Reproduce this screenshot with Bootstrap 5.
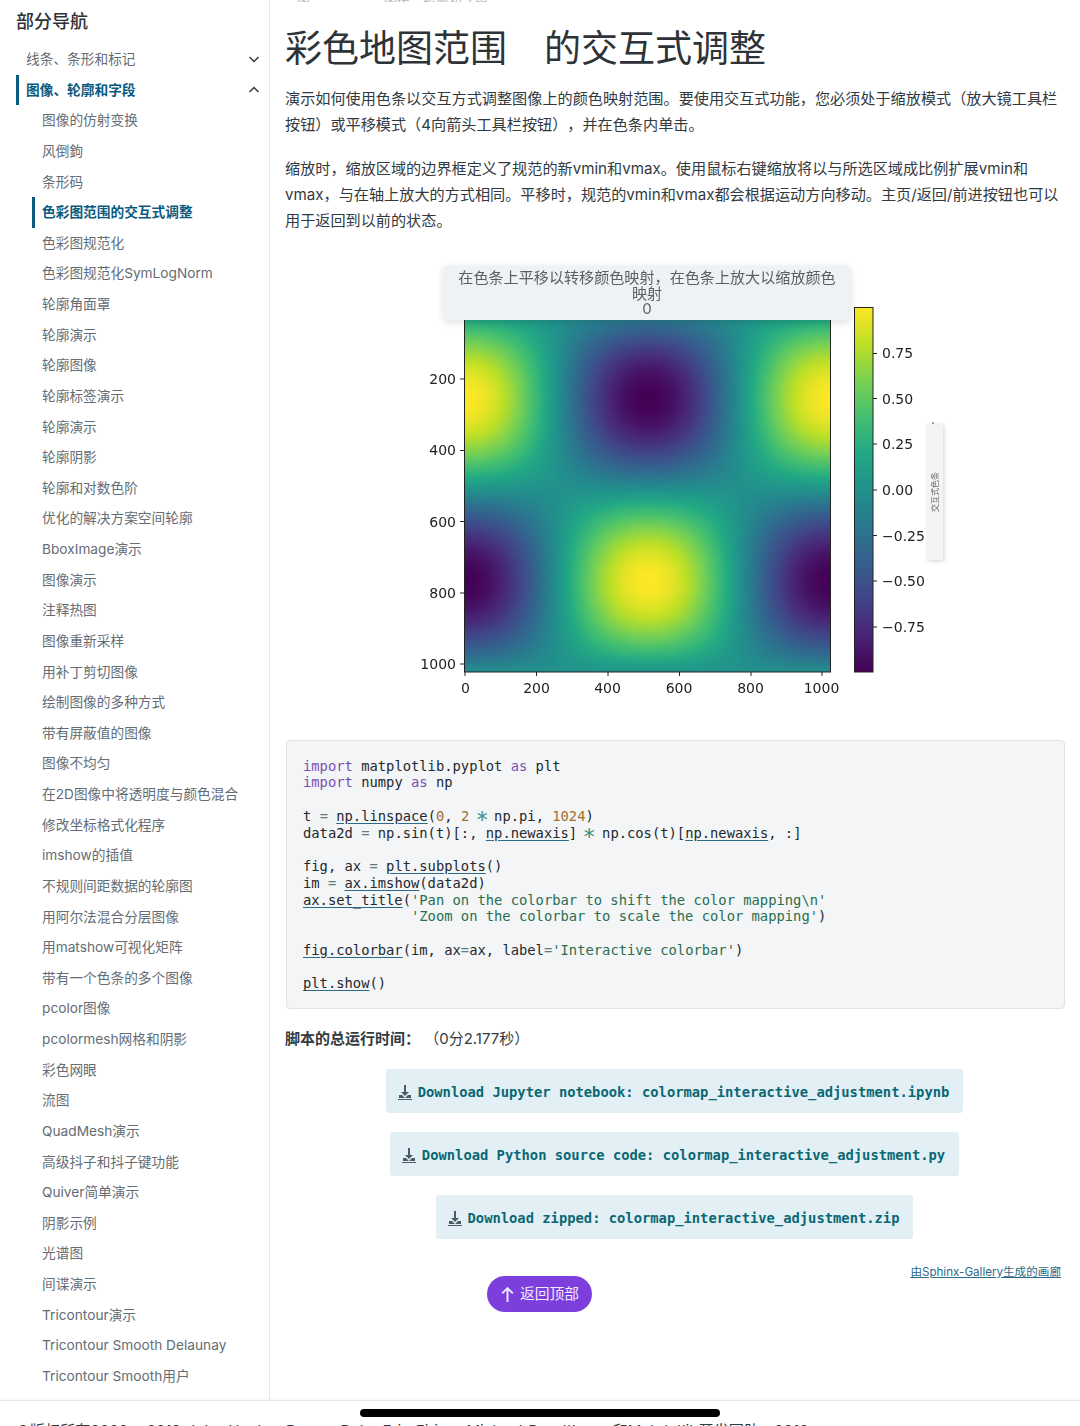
<!DOCTYPE html>
<html lang="zh-CN">
<head>
<meta charset="UTF-8">
<meta name="viewport" content="width=device-width, initial-scale=1.0">
<title>色彩图范围的交互式调整</title>
<link href="https://cdn.jsdelivr.net/npm/bootstrap@5.3.2/dist/css/bootstrap.min.css" rel="stylesheet">
<style>
html, body { height: 1426px; overflow: hidden; }
body { font-family: Inter, "Noto Sans CJK SC", sans-serif; color: #323a41; background: #fff; text-spacing-trim: space-all; }
.page-wrap { height: 1400px; }
.side-nav { width: 270px; flex: none; border-right: 1px solid #e3e6e8; padding: 0 9px 0 16px; }
.side-title { font-size: 18px; font-weight: 500; color: #2e3338; line-height: 22px; margin: 10.500px 0 11.500px; }
.side-nav .nav-link { font-size: 13.7px; line-height: 30.63px; height: 30.63px; padding: 0 0 0 7px; color: #646d75; border-left: 3px solid transparent; white-space: nowrap; }
.side-nav .sub-list .nav-link { margin-left: 16px; }
.side-nav .nav-link.on { color: #0a5a80; font-weight: 600; border-left-color: #0a5a80; }
.chev { width: 12px; height: 12px; }
.main-col { flex: 1; min-width: 0; padding: 0 16px 0 15px; }
.crumb-cut { height: 2px; overflow: hidden; font-size: 13px; line-height: 3px; color: #bbb; padding-left: 12px; gap: 74px; }
.page-title { font-size: 37px; font-weight: 400; line-height: 46px; color: #2e3338; margin: 24px 0 14px; }
.para { font-size: 15.15px; line-height: 26px; margin-bottom: 18px; color: #323a41; }
.plot-fig { position: relative; width: 780px; height: 475px; margin-top: 21px; margin-bottom: 10px; }
.plot-fig canvas { position: absolute; display: block; }
#heat { left: 180px; top: 52px; width: 366px; height: 365px; }
#cbar { left: 569px; top: 52px; width: 19px; height: 365px; }
.plot-fig svg { position: absolute; left: 0; top: 0; }
.plot-fig text { font-family: "DejaVu Sans", sans-serif; font-size: 14px; fill: #222; }
.pan-tip { position: absolute; left: 159px; top: 11px; width: 406px; height: 54px; background: #eef2f4; border-radius: 3px; box-shadow: 0 2px 8px rgba(0,0,0,.14); text-align: center; font-size: 15.1px; line-height: 15.6px; color: #5a5f63; padding: 4px 8px 0; }
.bar-tip { position: absolute; left: 642px; top: 169px; width: 16px; height: 136px; background: #f3f3f4; box-shadow: 1px 1px 4px rgba(0,0,0,.18); display: flex; align-items: center; justify-content: center; }
.bar-tip span { font-size: 8px; color: #666; transform: rotate(-90deg); white-space: nowrap; display: block; }
.code-box { width: 779px; height: 269px; background: #f3f5f6; border: 1px solid #e0e3e4; border-radius: 4px; padding: 16.500px 16px; margin: 0 0 19px 1px; font-family: "DejaVu Sans Mono", monospace; font-size: 13.8px; line-height: 16.77px; color: #24292e; overflow: hidden; }
.code-box a { color: inherit; text-decoration: underline; text-decoration-color: #2b6a89; text-underline-offset: 2px; }
.kw { color: #7a4fb3; }
.num { color: #a1702c; }
.op { color: #3a8f83; display: inline-block; width: 8.3px; line-height: 1; text-align: center; transform: scale(1.6); }
.eq { color: #5d7d80; }
.st { color: #2a6e50; }
.run-time { font-size: 15px; line-height: 22px; margin-bottom: 19px; color: #323a41; }
.dl-row { margin-bottom: 19px; height: 44px; }
.dl-btn { display: inline-flex; align-items: center; gap: 6px; height: 44px; padding: 2px 14px 0 12px; background: #e2f0f5; border-radius: 3px; font-family: "DejaVu Sans Mono", monospace; font-weight: 700; font-size: 13.8px; color: #0a6774; white-space: nowrap; text-decoration: none; }
.dl-btn svg { width: 14px; height: 16px; flex: none; }
.gal-line { font-size: 11.6px; line-height: 16px; margin: 25px 3px 0 0; }
.gal-line a { color: #2b6a89; text-decoration: underline; }
.top-btn { position: absolute; left: 487px; top: 1276px; width: 105px; height: 36px; border-radius: 18px; background: #7c3fdc; color: #f1e9fd; font-size: 14.8px; display: flex; align-items: center; justify-content: center; gap: 5px; }
.top-btn svg { width: 15px; height: 17px; }
.foot-bar { height: 26px; border-top: 1px solid #e3e6e8; box-shadow: 0 -1px 3px rgba(0,0,0,.05); font-size: 15.15px; line-height: 16px; color: #323a41; padding: 22px 0 0 16px; white-space: nowrap; overflow: hidden; word-spacing: 1.600px; }
.redact { position: absolute; left: 360px; top: 1409px; width: 360px; height: 8px; border-radius: 4px; background: #000; }
</style>
</head>
<body>
<div class="d-flex page-wrap">
  <nav class="side-nav">
    <div class="side-title">部分导航</div>
    <div class="nav flex-column">
      <a class="nav-link d-flex justify-content-between align-items-center" href="#">线条、条形和标记
        <svg class="chev" viewBox="0 0 12 12" fill="none" stroke="#333" stroke-width="1.4"><path d="M1.5 4l4.5 4.5L10.500 4"/></svg></a>
      <a class="nav-link on d-flex justify-content-between align-items-center" href="#">图像、轮廓和字段
        <svg class="chev" viewBox="0 0 12 12" fill="none" stroke="#333" stroke-width="1.4"><path d="M1.5 8L6 3.500 10.500 8"/></svg></a>
      <div class="sub-list nav flex-column">
        <a class="nav-link" href="#">图像的仿射变换</a>
        <a class="nav-link" href="#">风倒鉤</a>
        <a class="nav-link" href="#">条形码</a>
        <a class="nav-link on" href="#">色彩图范围的交互式调整</a>
        <a class="nav-link" href="#">色彩图规范化</a>
        <a class="nav-link" href="#">色彩图规范化SymLogNorm</a>
        <a class="nav-link" href="#">轮廓角面罩</a>
        <a class="nav-link" href="#">轮廓演示</a>
        <a class="nav-link" href="#">轮廓图像</a>
        <a class="nav-link" href="#">轮廓标签演示</a>
        <a class="nav-link" href="#">轮廓演示</a>
        <a class="nav-link" href="#">轮廓阴影</a>
        <a class="nav-link" href="#">轮廓和对数色阶</a>
        <a class="nav-link" href="#">优化的解决方案空间轮廓</a>
        <a class="nav-link" href="#">BboxImage演示</a>
        <a class="nav-link" href="#">图像演示</a>
        <a class="nav-link" href="#">注释热图</a>
        <a class="nav-link" href="#">图像重新采样</a>
        <a class="nav-link" href="#">用补丁剪切图像</a>
        <a class="nav-link" href="#">绘制图像的多种方式</a>
        <a class="nav-link" href="#">带有屏蔽值的图像</a>
        <a class="nav-link" href="#">图像不均匀</a>
        <a class="nav-link" href="#">在2D图像中将透明度与颜色混合</a>
        <a class="nav-link" href="#">修改坐标格式化程序</a>
        <a class="nav-link" href="#">imshow的插值</a>
        <a class="nav-link" href="#">不规则间距数据的轮廓图</a>
        <a class="nav-link" href="#">用阿尔法混合分层图像</a>
        <a class="nav-link" href="#">用matshow可视化矩阵</a>
        <a class="nav-link" href="#">带有一个色条的多个图像</a>
        <a class="nav-link" href="#">pcolor图像</a>
        <a class="nav-link" href="#">pcolormesh网格和阴影</a>
        <a class="nav-link" href="#">彩色网眼</a>
        <a class="nav-link" href="#">流图</a>
        <a class="nav-link" href="#">QuadMesh演示</a>
        <a class="nav-link" href="#">高级抖子和抖子键功能</a>
        <a class="nav-link" href="#">Quiver简单演示</a>
        <a class="nav-link" href="#">阴影示例</a>
        <a class="nav-link" href="#">光谱图</a>
        <a class="nav-link" href="#">间谍演示</a>
        <a class="nav-link" href="#">Tricontour演示</a>
        <a class="nav-link" href="#">Tricontour Smooth Delaunay</a>
        <a class="nav-link" href="#">Tricontour Smooth用户</a>
      </div>
    </div>
  </nav>

  <main class="main-col">
    <div class="crumb-cut d-flex"><span>图</span><span>图像、轮廓和字段</span></div>
    <h1 class="page-title">彩色地图范围　的交互式调整</h1>
    <p class="para">演示如何使用色条以交互方式调整图像上的颜色映射范围。要使用交互式功能，您必须处于缩放模式（放大镜工具栏按钮）或平移模式（4向箭头工具栏按钮），并在色条内单击。</p>
    <p class="para">缩放时，缩放区域的边界框定义了规范的新vmin和vmax。使用鼠标右键缩放将以与所选区域成比例扩展vmin和vmax，与在轴上放大的方式相同。平移时，规范的vmin和vmax都会根据运动方向移动。主页/返回/前进按钮也可以用于返回到以前的状态。</p>

    <div class="plot-fig">
      <canvas id="heat" width="366" height="365"></canvas>
      <canvas id="cbar" width="19" height="365"></canvas>
      <svg id="axes" width="780" height="475" viewBox="285 255 780 475">
        <g fill="none" stroke="#222" stroke-width="1">
          <rect x="464.500" y="307.500" width="366" height="364.500"/>
          <rect x="854.500" y="307.500" width="18.500" height="364.500"/>
          <path d="M460 379h4M460 450.500h4M460 521.500h4M460 593h4M460 664h4"/>
          <path d="M465 672v4M536.500 672v4M608 672v4M679.500 672v4M751 672v4M822 672v4"/>
          <path d="M873 353.500h4M873 398.500h4M873 444h4M873 490h4M873 535.500h4M873 581h4M873 627h4"/>
        </g>
        <circle cx="933" cy="423" r="0.800" fill="#333"/>
        <g text-anchor="end">
          <text x="456" y="384">200</text>
          <text x="456" y="455">400</text>
          <text x="456" y="527">600</text>
          <text x="456" y="598">800</text>
          <text x="456" y="669">1000</text>
        </g>
        <g text-anchor="middle">
          <text x="465.500" y="693">0</text>
          <text x="536.500" y="693">200</text>
          <text x="607.500" y="693">400</text>
          <text x="679" y="693">600</text>
          <text x="750.500" y="693">800</text>
          <text x="821.500" y="693">1000</text>
        </g>
        <g>
          <text x="882" y="358">0.75</text>
          <text x="882" y="404">0.50</text>
          <text x="882" y="449">0.25</text>
          <text x="882" y="495">0.00</text>
          <text x="882" y="541">−0.25</text>
          <text x="882" y="586">−0.50</text>
          <text x="882" y="632">−0.75</text>
        </g>
      </svg>
      <div class="pan-tip">在色条上平移以转移颜色映射，在色条上放大以缩放颜色映射<br>0</div>
      <div class="bar-tip"><span>交互式色条</span></div>
    </div>

    <pre class="code-box"><span class="kw">import</span> matplotlib.pyplot <span class="kw">as</span> plt
<span class="kw">import</span> numpy <span class="kw">as</span> np

t <span class="eq">=</span> <a href="#">np.linspace</a>(<span class="num">0</span>, <span class="num">2</span> <span class="op">∗</span> np.pi, <span class="num">1024</span>)
data2d <span class="eq">=</span> np.sin(t)[:, <a href="#">np.newaxis</a>] <span class="op">∗</span> np.cos(t)[<a href="#">np.newaxis</a>, :]

fig, ax <span class="eq">=</span> <a href="#">plt.subplots</a>()
im <span class="eq">=</span> <a href="#">ax.imshow</a>(data2d)
<a href="#">ax.set_title</a>(<span class="st">'Pan on the colorbar to shift the color mapping\n'</span>
             <span class="st">'Zoom on the colorbar to scale the color mapping'</span>)

<a href="#">fig.colorbar</a>(im, ax<span class="eq">=</span>ax, label<span class="eq">=</span><span class="st">'Interactive colorbar'</span>)

<a href="#">plt.show</a>()</pre>

    <p class="run-time"><strong class="fw-semibold">脚本的总运行时间：</strong>&nbsp;（0分2.177秒）</p>

    <div class="dl-row text-center"><a class="dl-btn" href="#"><svg viewBox="0 0 14 16" fill="#4a5a68"><path d="M6 1h2v7h3l-4 4-4-4h3z"/><path d="M1 11h3l3 3 3-3h3v3H1zM0 15h14v1H0z"/></svg>Download Jupyter notebook: colormap_interactive_adjustment.ipynb</a></div>
    <div class="dl-row text-center"><a class="dl-btn" href="#"><svg viewBox="0 0 14 16" fill="#4a5a68"><path d="M6 1h2v7h3l-4 4-4-4h3z"/><path d="M1 11h3l3 3 3-3h3v3H1zM0 15h14v1H0z"/></svg>Download Python source code: colormap_interactive_adjustment.py</a></div>
    <div class="dl-row text-center"><a class="dl-btn" href="#"><svg viewBox="0 0 14 16" fill="#4a5a68"><path d="M6 1h2v7h3l-4 4-4-4h3z"/><path d="M1 11h3l3 3 3-3h3v3H1zM0 15h14v1H0z"/></svg>Download zipped: colormap_interactive_adjustment.zip</a></div>

    <p class="gal-line text-end"><a href="#">由Sphinx-Gallery生成的画廊</a></p>
  </main>
</div>

<div class="foot-bar">©版权所有2002 - 2012 John Hunter, Darren Dale, Eric Firing, Michael Droettboom和Matplotlib开发团队；2012</div>
<div class="redact"></div>
<a class="top-btn text-decoration-none" href="#"><svg viewBox="0 0 14 16" fill="none" stroke="#f1e9fd" stroke-width="1.800"><path d="M7 15V2M2 7l5-5 5 5"/></svg>返回顶部</a>

<script src="https://cdn.jsdelivr.net/npm/bootstrap@5.3.2/dist/js/bootstrap.bundle.min.js"></script>
<script>
// viridis stops, evenly spaced
const stops = [[68,1,84],[72,36,117],[65,68,135],[53,95,141],[42,120,142],[33,145,140],[34,168,132],[68,191,112],[122,209,81],[189,223,38],[253,231,37]];
function viridis(v) {
  let p = Math.min(Math.max(v, 0), 1) * (stops.length - 1);
  let i = Math.min(Math.floor(p), stops.length - 2);
  let f = p - i;
  return stops[i].map((c, k) => c + (stops[i + 1][k] - c) * f);
}

let heat = document.getElementById("heat");
let hctx = heat.getContext("2d");
let himg = hctx.createImageData(heat.width, heat.height);
for (let y = 0; y < heat.height; y++) {
  for (let x = 0; x < heat.width; x++) {
    let val = Math.sin(y / heat.height * 2 * Math.PI) * Math.cos(x / heat.width * 2 * Math.PI);
    let c = viridis((val + 1) / 2);
    let o = (y * heat.width + x) * 4;
    himg.data[o] = c[0]; himg.data[o + 1] = c[1]; himg.data[o + 2] = c[2]; himg.data[o + 3] = 255;
  }
}
hctx.putImageData(himg, 0, 0);

let bar = document.getElementById("cbar");
let bctx = bar.getContext("2d");
for (let y = 0; y < bar.height; y++) {
  let c = viridis(1 - y / (bar.height - 1));
  bctx.fillStyle = `rgb(${c[0]},${c[1]},${c[2]})`;
  bctx.fillRect(0, y, bar.width, 1);
}
</script>
</body>
</html>
